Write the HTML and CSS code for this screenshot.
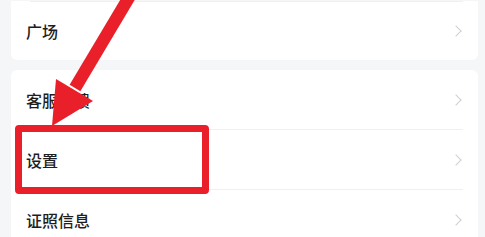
FILE: index.html
```html
<!DOCTYPE html>
<html lang="zh-CN">

<head>
    <meta charset="UTF-8">
    <meta name="viewport" content="width=device-width, initial-scale=1.0">
    <title>我的 - 设置</title>
    <link rel="stylesheet" href="styles.css">
</head>

<body>
    <div class="page">
        <div class="card card-top">
            <div class="divider"></div>
            <div class="row">
                <span class="row-title">广场</span>
                <span class="chevron"></span>
            </div>
        </div>

        <div class="card">
            <div class="row">
                <span class="row-title">客服反馈</span>
                <span class="chevron"></span>
            </div>
            <div class="divider"></div>
            <div class="row">
                <span class="row-title">设置</span>
                <span class="chevron"></span>
            </div>
            <div class="divider"></div>
            <div class="row">
                <span class="row-title">证照信息</span>
                <span class="chevron"></span>
            </div>
        </div>

        <!-- annotation overlays -->
        <div class="mark-box"></div>
        <svg class="mark-arrow" width="485" height="237" viewBox="0 0 485 237">
            <line x1="131" y1="-6" x2="75" y2="88" stroke="#e9202a" stroke-width="12.5" />
            <polygon points="52,126 56,79 93,101" fill="#e9202a" />
        </svg>
    </div>
</body>

</html>
```

FILE: styles.css
```css
body {
    margin: 0;
    background: #f5f6f8;
    font-family: "Noto Sans CJK SC", "Noto Sans", sans-serif;
    overflow: hidden;
}

.page {
    position: relative;
    width: 485px;
    height: 237px;
    padding: 1px 7px 0 11px;
    box-sizing: border-box;
    overflow: hidden;
}

.card {
    background: #fff;
    border-radius: 6px;
    margin-bottom: 10px;
}

.card-top {
    border-radius: 0 0 6px 6px;
}

.divider {
    height: 1px;
    margin: 0 15px 0 19px;
    background: #f0f0f2;
}

.row {
    height: 59px;
    display: flex;
    align-items: center;
    justify-content: space-between;
    padding: 0 16px 0 15px;
}

.card-top .row {
    height: 58px;
}

.row-title {
    font-size: 16px;
    font-weight: 500;
    color: #1e1e1e;
}

.chevron {
    width: 7px;
    height: 7px;
    border-top: 1px solid #cfcfd2;
    border-right: 1px solid #cfcfd2;
    transform: rotate(45deg);
    margin-right: 2px;
}

.mark-box {
    position: absolute;
    left: 15px;
    top: 125px;
    width: 180px;
    height: 55px;
    border: 7px solid #e9202a;
    border-radius: 4px;
}

.mark-arrow {
    position: absolute;
    left: 0;
    top: 0;
}
```
